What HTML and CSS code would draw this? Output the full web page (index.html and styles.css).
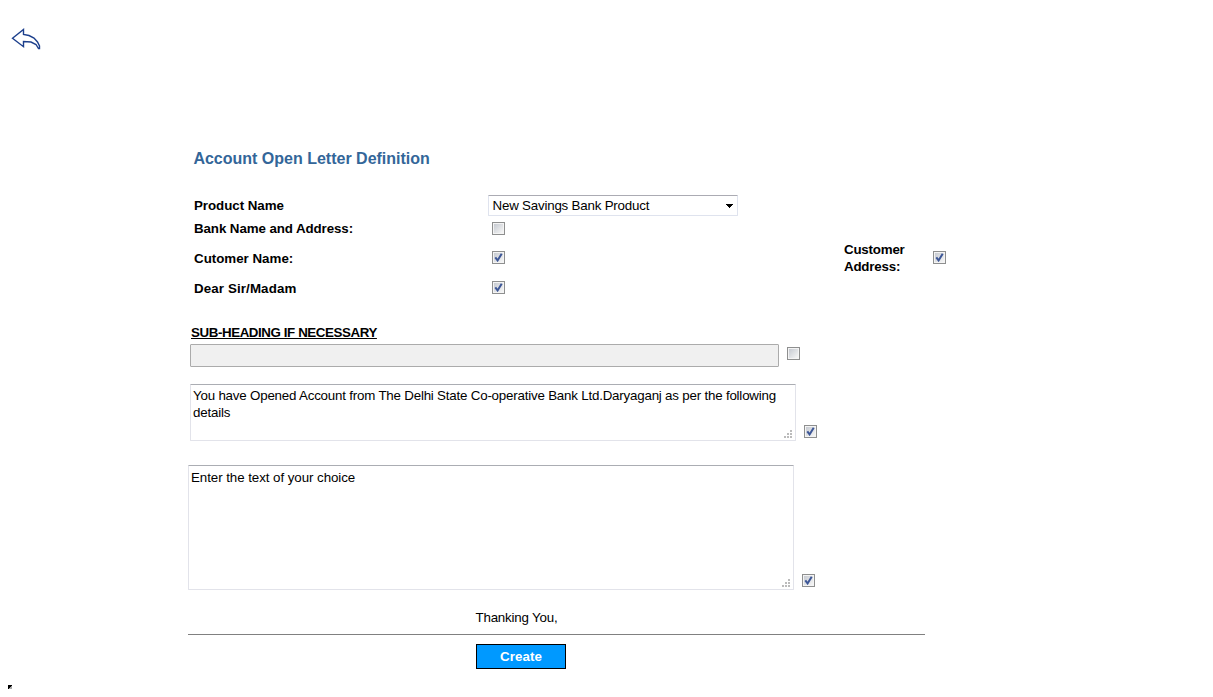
FILE: index.html
```html
<!DOCTYPE html>
<html lang="en">
<head>
<meta charset="utf-8">
<title>Account Open Letter Definition</title>
<link rel="stylesheet" href="styles.css">
</head>
<body>
<header class="top">
  <a class="back" aria-label="Back"><svg width="30" height="22" viewBox="0 0 30 22" fill="none" stroke="#1c3f8c" stroke-width="1.4"><path d="M1.5 10.3 L12.5 1.5 V6.5 L18 7.5 L23 10 L26.5 14 L28.5 18 V20.5 H27.5 L25 16.5 L20 14 L12.5 13.5 V18.7 Z"/></svg></a>
</header>
<main class="form">
  <h1 class="title">Account Open Letter Definition</h1>
  <div class="row row-product"><span class="label">Product Name</span><div class="select"><span class="value">New Savings Bank Product</span><svg width="7" height="4" viewBox="0 0 7 4" shape-rendering="crispEdges"><path d="M0 0H7V1H6V2H5V3H4V4H3V3H2V2H1V1H0Z"/></svg></div></div>
  <div class="row row-bank"><span class="label">Bank Name and Address:</span><span class="check"></span></div>
  <div class="row row-customer"><span class="label">Cutomer Name:</span><span class="check"><svg class="tick" viewBox="0 0 9 9"><path d="M1.3 4.3L3.6 7.4L7.7 .7"/></svg></span><span class="label address">Customer<br>Address:</span><span class="check"><svg class="tick" viewBox="0 0 9 9"><path d="M1.3 4.3L3.6 7.4L7.7 .7"/></svg></span></div>
  <div class="row row-dear"><span class="label">Dear Sir/Madam</span><span class="check"><svg class="tick" viewBox="0 0 9 9"><path d="M1.3 4.3L3.6 7.4L7.7 .7"/></svg></span></div>
  <h2 class="subheading">SUB-HEADING IF NECESSARY</h2>
  <div class="field field-sub"><div class="disabled-input"></div><span class="check"></span></div>
  <div class="field field-body"><div class="area area-body"><p class="text wide">You have Opened Account from The Delhi State Co-operative Bank Ltd.Daryaganj as per the following<br>details</p><svg class="grip" viewBox="0 0 8 8"><path d="M6 0h2v2h-2zM3 3h2v2h-2zM6 3h2v2h-2zM0 6h2v2h-2zM3 6h2v2h-2zM6 6h2v2h-2z"/></svg></div><span class="check"><svg class="tick" viewBox="0 0 9 9"><path d="M1.3 4.3L3.6 7.4L7.7 .7"/></svg></span></div>
  <div class="field field-choice"><div class="area area-choice"><p class="text">Enter the text of your choice</p><svg class="grip" viewBox="0 0 8 8"><path d="M6 0h2v2h-2zM3 3h2v2h-2zM6 3h2v2h-2zM0 6h2v2h-2zM3 6h2v2h-2zM6 6h2v2h-2z"/></svg></div><span class="check"><svg class="tick" viewBox="0 0 9 9"><path d="M1.3 4.3L3.6 7.4L7.7 .7"/></svg></span></div>
  <p class="thanks">Thanking You,</p>
  <hr class="rule">
  <button class="create">Create</button>
</main>
<svg class="marker" width="4" height="4" viewBox="0 0 4 4" shape-rendering="crispEdges"><path fill="#aaa" d="M0 0H4V4H0Z"/><path fill="#000" d="M0 0H4V1H3V2H2V3H1V4H0Z"/></svg>
</body>
</html>
```
FILE: styles.css
```css
* { box-sizing: border-box; }
body { margin: 0; height: 697px; overflow: hidden; background: #fff; color: #000; font: 13.333px/17px "Liberation Sans", Arial, sans-serif; }
.top { height: 149px; padding: 28px 0 0 11px; }
.back, .back svg { display: block; }
.form { width: 767px; margin-left: 188px; }
.title { margin: 0 0 26px 5.4px; font-size: 16px; line-height: 20px; color: #336699; }
.row { display: flex; align-items: center; padding-left: 6px; }
.row-product { height: 21px; }
.row-bank { height: 27px; padding-bottom: 2px; }
.row-customer, .row-dear { height: 30px; }
.label { flex: none; width: 298px; font-weight: bold; }
.row-product .label { width: 294px; letter-spacing: -.04px; }
.row-bank .label { letter-spacing: -.09px; }
.row-dear .label { letter-spacing: .12px; }
.select { display: flex; align-items: center; justify-content: space-between; width: 250px; height: 21px; padding: 0 4px 0 3.5px; border: 1px solid #dfe3ee; border-top-color: #ababb3; border-radius: 1px; letter-spacing: -.2px; }
.check { display: flex; flex: none; width: 13px; height: 13px; padding: 1px; border: 1px solid #8e8f8f; background: linear-gradient(135deg, #c6cad1, #f6f6f6) content-box, #f4f4f4; }
.row-customer .check, .row-dear .check { margin-top: -1px; }
.row-customer .address { width: 89px; margin-left: 339px; letter-spacing: -.2px; }
.tick { width: 9px; height: 9px; fill: none; stroke: #3d5797; stroke-width: 2; }
.subheading { margin: 21px 0 3px 3px; font-size: 13.333px; line-height: 17px; font-weight: bold; letter-spacing: -.41px; text-decoration: underline; }
.field { display: flex; gap: 8px; }
.field-sub { padding-left: 2px; margin-bottom: 17px; }
.field-sub .check { margin-top: 3px; }
.disabled-input { width: 589px; height: 23px; border: 1px solid #ababab; background: #f0f0f0; border-radius: 1px; }
.field-body { align-items: flex-end; padding-left: 2px; margin-bottom: 24px; }
.field-choice { align-items: flex-end; }
.field-body .check, .field-choice .check { margin-bottom: 3px; }
.area { position: relative; flex: none; width: 606px; padding: 2px; border: 1px solid #e2e3ea; border-top-color: #abadb3; border-radius: 1px; }
.area-body { height: 57px; }
.area-choice { height: 125px; padding-top: 3px; }
.text { margin: 0; white-space: nowrap; letter-spacing: -.06px; }
.wide { letter-spacing: -.2px; }
.grip { position: absolute; right: 3px; bottom: 2px; width: 8px; height: 8px; fill: #bbb; }
.thanks { margin: 19px 0 16px 287.5px; line-height: 17px; letter-spacing: -.2px; }
.rule { width: 737px; height: 1px; margin: -8px 0 9px; border: 0; background: #808080; }
.create { display: block; width: 90px; height: 25px; margin-left: 288px; padding: 0; border: 1px solid #000; background: #0099ff; color: #fff; font: bold 13.333px "Liberation Sans", Arial, sans-serif; letter-spacing: .1px; }
.marker { display: block; margin: 16px 0 0 8px; }
```
